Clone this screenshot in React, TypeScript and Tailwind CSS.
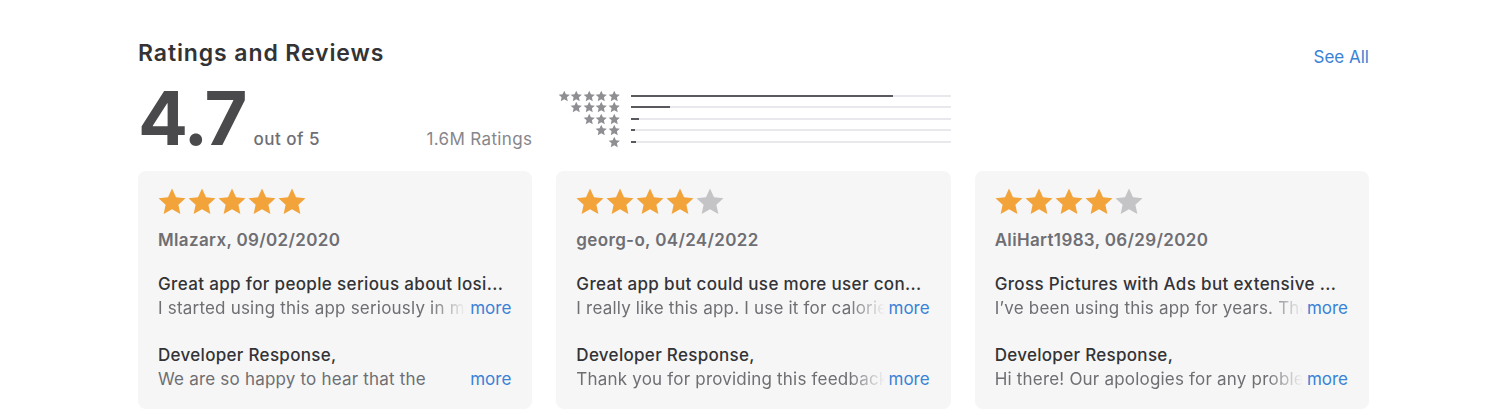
import React from "react"

type Review = {
    stars: number
    author: string
    title: string
    body: string
    response: string
}

const reviews: Review[] = [
    {
        stars: 5,
        author: "Mlazarx, 09/02/2020",
        title: "Great app for people serious about losi...",
        body: "I started using this app seriously in my",
        response: "We are so happy to hear that the",
    },
    {
        stars: 4,
        author: "georg-o, 04/24/2022",
        title: "Great app but could use more user con...",
        body: "I really like this app. I use it for calories",
        response: "Thank you for providing this feedback",
    },
    {
        stars: 4,
        author: "AliHart1983, 06/29/2020",
        title: "Gross Pictures with Ads but extensive ...",
        body: "I\u2019ve been using this app for years. The",
        response: "Hi there! Our apologies for any problem",
    },
]

// share of ratings per star row, 5 down to 1
const distribution = [82, 12, 2.5, 1, 1.5]

const STAR = "M12 1.2l3.2 7 7.6.8-5.7 5.1 1.6 7.5L12 17.7l-6.7 3.9 1.6-7.5-5.7-5.1 7.6-.8z"

function Star({ className }: { className: string }) {
    return (
        <svg viewBox="0 0 24 24" className={className}>
            <path d={STAR} fill="currentColor" />
        </svg>
    )
}

function FadeLine({ text, fade }: { text: string; fade: boolean }) {
    return (
        <div className="flex items-center justify-between text-[17px] leading-6 tracking-[0.2px] text-[#6e6e73]">
            <span
                className={
                    fade
                        ? "flex-1 overflow-hidden whitespace-nowrap [mask-image:linear-gradient(to_right,black_calc(100%-38px),transparent_calc(100%-2px))]"
                        : "flex-1 overflow-hidden whitespace-nowrap"
                }
            >
                {text}
            </span>
            <a className="ml-0.5 shrink-0 tracking-normal text-[#3a82d6]">more</a>
        </div>
    )
}

function ReviewCard({ review, idx }: { review: Review; idx: number }) {
    return (
        <div className="h-[238px] rounded-lg bg-[#f6f6f7] pl-5 pr-[21px] pt-4">
            <div className="flex gap-[1px]">
                {[0, 1, 2, 3, 4].map((i) => (
                    <Star
                        key={i}
                        className={i < review.stars ? "h-[30px] w-[30px] -ml-[1px] text-[#f2a33a]" : "h-[30px] w-[30px] -ml-[1px] text-[#c4c4c6]"}
                    />
                ))}
            </div>
            <div className="mt-[11px] text-[17px] font-semibold leading-6 tracking-[0.35px] text-[#6e6e73]">{review.author}</div>
            <div className="mt-[20px] truncate text-[17px] font-medium leading-6 tracking-[0.35px] text-[#333336]">{review.title}</div>
            <FadeLine text={review.body} fade />
            <div className="mt-[23px] text-[17px] font-medium leading-6 tracking-[0.3px] text-[#333336]">Developer Response,</div>
            <FadeLine text={review.response} fade={idx !== 0} />
        </div>
    )
}

export default function App() {
    return (
        <div className="min-h-[420px] bg-white font-['Inter','Liberation_Sans',sans-serif] antialiased">
            <section className="ml-[138px] w-[1231px] pt-[37px]">
                <div className="flex items-end justify-between">
                    <h2 className="text-[23px] font-semibold leading-8 tracking-[0.9px] text-[#333336]">Ratings and Reviews</h2>
                    <a className="mb-0 text-[17px] leading-6 text-[#3a82d6]">See All</a>
                </div>

                <div className="mt-[17px] grid grid-cols-3 gap-x-6">
                    <div className="flex items-end justify-between">
                        <div className="flex items-end">
                            <span className="text-[74px] font-bold leading-[64px] tracking-[-2px] text-[#4a4a4d]">4.7</span>
                            <span className="mb-[-1px] ml-[8px] text-[17px] font-medium leading-6 tracking-[0.5px] text-[#6e6e73]">out of 5</span>
                        </div>
                        <span className="mb-[-1px] text-[17px] leading-6 tracking-[0.35px] text-[#86868b]">1.6M Ratings</span>
                    </div>

                    <div className="flex flex-col pt-[4px] pl-[1px]">
                        {distribution.map((pct, row) => (
                            <div key={row} className="flex h-[11.5px] items-center">
                                <div className="flex w-[63px] justify-end">
                                    {Array.from({ length: 5 - row }).map((_, i) => (
                                        <Star key={i} className="h-[12.5px] w-[12.5px] text-[#8e8e93]" />
                                    ))}
                                </div>
                                <div className="ml-[11px] h-[2px] flex-1 bg-[#e8e8ed]">
                                    <div className="h-[2px] bg-[#5a5a5e]" style={{ width: `${pct}%` }} />
                                </div>
                            </div>
                        ))}
                    </div>
                    <div />
                </div>

                <div className="mt-[21px] grid grid-cols-3 gap-x-6">
                    {reviews.map((r, i) => (
                        <ReviewCard key={r.author} review={r} idx={i} />
                    ))}
                </div>
            </section>
        </div>
    )
}
